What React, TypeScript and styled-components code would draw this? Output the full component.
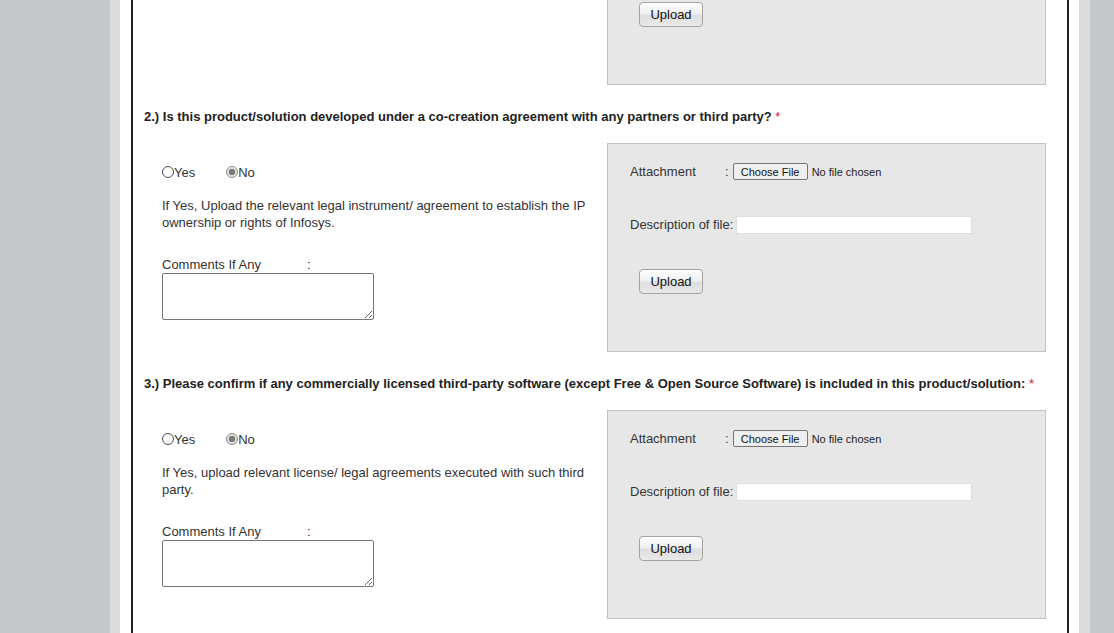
import React from "react";
import styled, { createGlobalStyle } from "styled-components";

const Global = createGlobalStyle`
  html, body { margin: 0; padding: 0; }
  body {
    background: #c4c8cb;
    font-family: "Liberation Sans", Arial, sans-serif;
    font-size: 13px;
    color: #333;
    overflow: hidden;
    height: 633px;
  }
`;

const Page = styled.div`
  display: flex;
  padding-left: 110px;
  height: 633px;
`;

const Frame = styled.div`
  width: 938px;
  background: #fff;
  border-left: 10px solid #dcdcdc;
  border-right: 11px solid #dcdcdc;
  padding: 0 10px 0 11px;
  display: flex;
  flex-direction: column;
`;

const Box = styled.div`
  flex: 1;
  display: flow-root;
  border-left: 2px solid #222;
  border-right: 2px solid #222;
  overflow: hidden;
`;

const Scroller = styled.div`
  margin-top: -124px;
`;

const Heading = styled.div`
  height: 58px;
  box-sizing: border-box;
  padding: 25px 0 0 11px;
  font-weight: bold;
  font-size: 13px;
  line-height: 14px;
  color: #222;
  white-space: nowrap;
`;

const Star = styled.span`
  color: #e0162b;
  font-weight: normal;
`;

const Row = styled.div`
  display: flex;
  padding: 0 21px 0 29px;
`;

const LeftCol = styled.div`
  width: 436px;
  margin-right: auto;
  padding-top: 20px;
`;

const RadioRow = styled.div`
  display: flex;
  align-items: center;
  height: 18px;
`;

const RadioLabel = styled.label<{ $gap?: number }>`
  display: inline-flex;
  align-items: center;
  margin-left: ${(p) => p.$gap ?? 0}px;
  font-size: 13px;
  color: #333;
`;

const Radio = styled.span<{ $checked?: boolean }>`
  display: inline-block;
  box-sizing: border-box;
  width: 12px;
  height: 12px;
  border-radius: 50%;
  border: 1px solid ${(p) => (p.$checked ? "#8c8c8c" : "#4a4a4a")};
  background: ${(p) =>
    p.$checked
      ? "radial-gradient(circle, #7a7a7a 0 3px, #e4e4e4 3.6px)"
      : "#fff"};
`;

const Note = styled.p`
  margin: 16px 0 0;
  line-height: 17px;
  font-size: 13px;
  color: #333;
`;

const CommentLabel = styled.div`
  margin-top: 26px;
  line-height: 16px;
  display: flex;
`;

const CommentText = styled.span`
  width: 145px;
`;

const TextArea = styled.textarea`
  display: block;
  box-sizing: border-box;
  margin-top: 0;
  width: 212px;
  height: 47px;
  border: 1px solid #767676;
  border-radius: 2px;
  font-family: "Liberation Sans", Arial, sans-serif;
`;

const Panel = styled.div`
  width: 439px;
  height: 209px;
  box-sizing: border-box;
  border: 1px solid #c3c3c3;
  background: #e7e7e7;
  padding: 18px 0 0 22px;
`;

const FieldRow = styled.div<{ $top?: number }>`
  display: flex;
  align-items: center;
  height: 19px;
  margin-top: ${(p) => p.$top ?? 0}px;
  font-size: 13px;
  color: #333;
`;

const FieldLabel = styled.span<{ $w?: number }>`
  width: ${(p) => (p.$w ? `${p.$w}px` : "auto")};
  white-space: pre;
`;

const ChooseButton = styled.button`
  box-sizing: border-box;
  height: 17px;
  width: 75px;
  padding: 0;
  margin-left: 4px;
  font-family: "Liberation Sans", Arial, sans-serif;
  font-size: 11px;
  color: #111;
  background: #efefef;
  border: 1px solid #767676;
  border-radius: 2px;
`;

const FileName = styled.span`
  margin-left: 4px;
  font-size: 11px;
  color: #222;
`;

const DescInput = styled.input`
  box-sizing: border-box;
  width: 236px;
  height: 18px;
  margin-left: 3px;
  border: 1px solid #dedede;
  background: #fff;
  padding: 0;
`;

const UploadButton = styled.button`
  display: block;
  box-sizing: border-box;
  margin: 35px 0 0 9px;
  width: 64px;
  height: 25px;
  padding: 0 0 1px;
  font-family: "Liberation Sans", Arial, sans-serif;
  font-size: 13px;
  color: #111;
  border: 1px solid #a3a3a3;
  border-radius: 4px;
  background: linear-gradient(#fdfdfd 0%, #f1f1f1 45%, #dedede 55%, #e9e9e9 100%);
  box-shadow: inset 0 1px 0 #fff;
`;

type Q = { n: number; title: string; note: string };

const questions: Q[] = [
  {
    n: 2,
    title:
      "Is this product/solution developed under a co-creation agreement with any partners or third party?",
    note:
      "If Yes, Upload the relevant legal instrument/ agreement to establish the IP ownership or rights of Infosys.",
  },
  {
    n: 3,
    title:
      "Please confirm if any commercially licensed third-party software (except Free & Open Source Software) is included in this product/solution:",
    note:
      "If Yes, upload relevant license/ legal agreements executed with such third party.",
  },
];

const AttachPanel = () => (
  <Panel>
    <FieldRow>
      <FieldLabel $w={95}>Attachment</FieldLabel>
      <span>:</span>
      <ChooseButton type="button">Choose File</ChooseButton>
      <FileName>No file chosen</FileName>
    </FieldRow>
    <FieldRow $top={34}>
      <FieldLabel>Description of file:</FieldLabel>
      <DescInput type="text" />
    </FieldRow>
    <UploadButton type="button">Upload</UploadButton>
  </Panel>
);

export default function App() {
  return (
    <>
      <Global />
      <Page>
        <Frame>
          <Box>
            <Scroller>
              <Row>
                <LeftCol />
                <AttachPanel />
              </Row>
              {questions.map((q) => (
                <React.Fragment key={q.n}>
                  <Heading>
                    {q.n}.) {q.title} <Star>*</Star>
                  </Heading>
                  <Row>
                    <LeftCol>
                      <RadioRow>
                        <RadioLabel>
                          <Radio />
                          Yes
                        </RadioLabel>
                        <RadioLabel $gap={31}>
                          <Radio $checked />
                          No
                        </RadioLabel>
                      </RadioRow>
                      <Note>{q.note}</Note>
                      <CommentLabel>
                        <CommentText>Comments If Any</CommentText>
                        <span>:</span>
                      </CommentLabel>
                      <TextArea />
                    </LeftCol>
                    <AttachPanel />
                  </Row>
                </React.Fragment>
              ))}
            </Scroller>
          </Box>
        </Frame>
      </Page>
    </>
  );
}
